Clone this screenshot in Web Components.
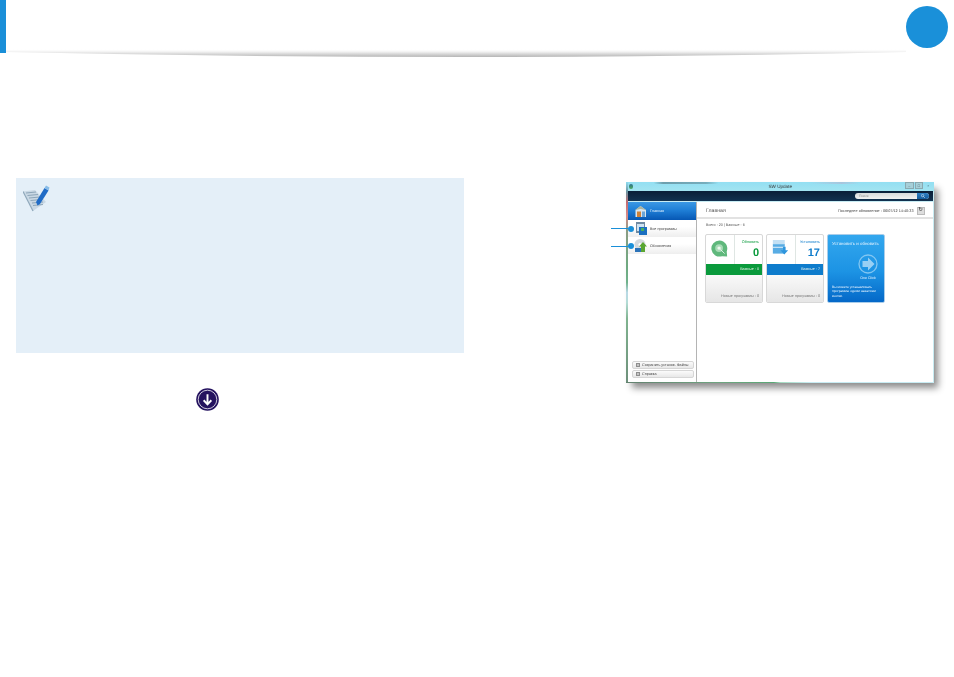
<!DOCTYPE html>
<html lang="ru">
<head>
<meta charset="utf-8">
<title>SW Update</title>
<style>
  html, body { margin: 0; background: #fff; }
  body { width: 954px; height: 677px; overflow: hidden; font-family: "Liberation Sans", Arial, sans-serif; }
</style>
</head>
<body>
<manual-page></manual-page>
<script>
class PageHeader extends HTMLElement {
  constructor() {
    super();
    this.attachShadow({ mode: 'open' });
    this.shadowRoot.innerHTML = `
      <style>
        :host { display: block; position: relative; height: 53px; }
        .bar { display: flex; justify-content: space-between; height: 53px; }
        .tab { width: 6px; background: #1a8fd8; }
        .dot { width: 42px; height: 42px; margin: 6px 6px 0 0; border-radius: 50%; background: #1a90d9; }
        .rule { position: absolute; left: 6px; top: 48px; display: block; }
      </style>
      <svg class="rule" width="900" height="11" viewBox="0 0 900 11">
        <defs>
          <linearGradient id="fade" gradientUnits="userSpaceOnUse" x1="0" y1="1" x2="0" y2="10">
            <stop offset="0" stop-color="#fff" stop-opacity="0"/>
            <stop offset=".45" stop-color="#e2e2e2"/>
            <stop offset="1" stop-color="#aaa"/>
          </linearGradient>
        </defs>
        <path d="M0 4 Q470 14 900 4 L900 0 L0 0 Z" fill="url(#fade)"/>
      </svg>
      <div class="bar"><div class="tab"></div><div class="dot"></div></div>
    `;
  }
}

class NoteBox extends HTMLElement {
  constructor() {
    super();
    this.attachShadow({ mode: 'open' });
    this.shadowRoot.innerHTML = `
      <style>
        :host { display: block; width: 448px; height: 175px; background: #e4eff8; box-sizing: border-box; padding: 7px 0 0 7px; }
        svg { display: block; }
      </style>
      <svg width="27" height="27" viewBox="0 0 27 27">
        <path d="M0 6.500 L12 5 L23 17 L10 26 Z" fill="#c9d8e4"/>
        <path d="M3 8 L13 7 M4.500 10.500 L15 9.500 M6 13 L17 12 M7.500 15.500 L18.500 14.500 M9 18 L20 17 M10 20.500 L20 19.500" stroke="#7d98ad" stroke-width=".8"/>
        <path d="M0 6.500 L10 26" stroke="#8fa8bb" stroke-width="1.200"/>
        <path d="M13 17 L21.500 3 L25.500 5.500 L17 19 L14.500 20.500 Z" fill="#1f6bc6"/>
        <path d="M21.500 3 L23 0.500 L26.500 2.500 L25.500 5.500 Z" fill="#87bce8"/>
      </svg>
    `;
  }
}

class DownButton extends HTMLElement {
  constructor() {
    super();
    this.attachShadow({ mode: 'open' });
    this.shadowRoot.innerHTML = `
      <style>
        :host { display: block; width: 23px; height: 23px; }
        svg { display: block; }
      </style>
      <svg width="23" height="23" viewBox="0 0 24 24">
        <circle cx="12" cy="12" r="11.800" fill="#24125f"/>
        <circle cx="12" cy="12" r="9.700" fill="none" stroke="#fff" stroke-width=".8"/>
        <path d="M12 6.500 V16.500 M8 12.800 L12 17 L16 12.800" fill="none" stroke="#fff" stroke-width="2"/>
      </svg>
    `;
  }
}

class NavItem extends HTMLElement {
  constructor() {
    super();
    this.attachShadow({ mode: 'open' });
    this.shadowRoot.innerHTML = `
      <style>
        :host {
          display: flex; align-items: center; height: 17px; box-sizing: border-box;
          padding-left: 6px; font-size: 3.7px; color: #444;
          background: linear-gradient(#fff 0%, #fff 40%, #eeeeee 100%);
        }
        :host([active]) {
          height: 18px; color: #e8f4ff;
          background: linear-gradient(#3b98e4 0%, #1f7fd6 45%, #0657b4 100%);
        }
        .ic { width: 13px; height: 13px; flex: none; }
        ::slotted(svg) { display: block; }
        .label { margin-left: 3px; white-space: nowrap; }
      </style>
      <div class="ic"><slot name="icon"></slot></div>
      <div class="label"><slot></slot></div>
    `;
  }
}

class TileCard extends HTMLElement {
  static get observedAttributes() { return ['label', 'count', 'band', 'foot', 'tone']; }
  constructor() {
    super();
    this.attachShadow({ mode: 'open' });
    this.shadowRoot.innerHTML = `
      <style>
        :host {
          display: flex; flex-direction: column; width: 58px; height: 69px; box-sizing: border-box;
          border: 1px solid #d8d8d8; border-radius: 2px; overflow: hidden; background: #fff;
          --tone: #0a9a3c;
        }
        :host([tone="blue"]) { --tone: #0e7ccc; }
        .top { display: flex; height: 29px; flex: none; }
        .ic { width: 29px; flex: none; display: flex; align-items: flex-start; justify-content: center; padding: 5px 2px 0 0; box-sizing: border-box; border-right: 1px solid #dfe6e3; }
        ::slotted(svg) { display: block; }
        .nums { flex: 1; text-align: right; padding: 5px 3px 0 0; color: var(--tone); }
        .lab { font-size: 3.8px; line-height: 5px; }
        .num { font-size: 11px; line-height: 13px; font-weight: 700; margin-top: 2px; }
        .band { height: 11px; flex: none; background: var(--tone); color: #e8f4ec; font-size: 3.7px; line-height: 11px; text-align: right; padding-right: 3px; }
        .foot {
          flex: 1; display: flex; align-items: flex-end; justify-content: flex-end; padding: 0 3px 3px 0;
          font-size: 3.8px; line-height: 5px; color: #777; background: linear-gradient(#f9f9f9, #e6e6e6);
        }
      </style>
      <div class="top">
        <div class="ic"><slot name="icon"></slot></div>
        <div class="nums"><div class="lab"></div><div class="num"></div></div>
      </div>
      <div class="band"></div>
      <div class="foot"></div>
    `;
  }
  attributeChangedCallback() {
    const root = this.shadowRoot;
    root.querySelector('.lab').textContent = this.getAttribute('label') || '';
    root.querySelector('.num').textContent = this.getAttribute('count') || '';
    root.querySelector('.band').textContent = this.getAttribute('band') || '';
    root.querySelector('.foot').textContent = this.getAttribute('foot') || '';
  }
}

class OneClickCard extends HTMLElement {
  constructor() {
    super();
    this.attachShadow({ mode: 'open' });
    this.shadowRoot.innerHTML = `
      <style>
        :host {
          display: flex; flex-direction: column; width: 58px; height: 69px; box-sizing: border-box;
          padding: 6px 4px 4px; border-radius: 2px; color: #e6f3ff; border: 1px solid #a9cdea;
          background: linear-gradient(#33a7ee 0%, #1c93e4 55%, #0468c8 100%);
        }
        .title { font-size: 4.4px; line-height: 6px; white-space: nowrap; }
        .go { align-self: flex-end; width: 20px; margin: 7px 2px 0 0; text-align: center; }
        svg { display: block; opacity: .9; }
        .one { font-size: 3.6px; line-height: 5px; margin-top: 2px; white-space: nowrap; }
        .desc { font-size: 3.3px; line-height: 4.5px; margin-top: auto; white-space: nowrap; }
      </style>
      <div class="title">Установить и обновить</div>
      <div class="go">
        <svg width="20" height="20" viewBox="0 0 20 20">
          <circle cx="10" cy="10" r="9" fill="none" stroke="#8ccbf3" stroke-width="1.300"/>
          <path d="M4.500 7 H10 V3.500 L16.500 10 L10 16.500 V13 H4.500 Z" fill="#a4d6f6"/>
        </svg>
        <div class="one">One Click</div>
      </div>
      <div class="desc">Вы можете устанавливать<br>программы одним нажатием<br>кнопки.</div>
    `;
  }
}

class SideButton extends HTMLElement {
  constructor() {
    super();
    this.attachShadow({ mode: 'open' });
    this.shadowRoot.innerHTML = `
      <style>
        :host {
          display: flex; align-items: center; gap: 2px; height: 8px; width: 62px; box-sizing: border-box;
          padding-left: 3px; font-size: 3.7px; color: #444; white-space: nowrap;
          border: 1px solid #d6d6d6; border-radius: 2px; background: linear-gradient(#fbfbfb, #e8e8e8);
        }
        i { width: 4px; height: 4px; flex: none; background: #c4c4c4; border: .5px solid #8e8e8e; box-sizing: border-box; }
      </style>
      <i></i><slot></slot>
    `;
  }
}

class AppWindow extends HTMLElement {
  constructor() {
    super();
    this.attachShadow({ mode: 'open' });
    this.shadowRoot.innerHTML = `
      <style>
        :host {
          display: block; position: relative; width: 308px; height: 201px; box-sizing: border-box;
          font-size: 3.8px; color: #444; text-rendering: geometricPrecision;
          box-shadow: 5px 6px 7px -1px rgba(0,0,0,.45);
          background: #c8ecf3;
        }
        .frame {
          height: 100%; display: flex; flex-direction: column; padding: 0 1.5px 1.5px 2px; box-sizing: border-box;
          background:
            linear-gradient(90deg, #62816f 0%, #6ea580 30%, #58a774 48%, #a5dcc0 50%, #c8ecf3 60%, #c8ecf3 100%) 0 100% / 100% 1.5px no-repeat,
            linear-gradient(180deg, #8fdcf0 0%, #6d94a0 5%, #c26b72 10%, #d88c8a 17%, #8b9c84 24%, #6ea980 42%, #70b28c 50%, #b9d9e6 55%, #b4dcd6 60%, #7fb38f 68%, #6d8f7a 100%) 0 0 / 2px 100% no-repeat,
            linear-gradient(90deg, transparent 0 9%, rgba(60,80,90,.45) 12%, rgba(60,80,90,.35) 26%, transparent 30% 60%, rgba(225,120,160,.25) 70%, transparent 76% 100%) 0 0 / 100% 2px no-repeat,
            linear-gradient(180deg, #93dff2 0, #a2e4f1 9px, #c8ecf3 10px);
          filter: blur(.45px);
        }
        .title {
          height: 9px; flex: none; display: flex; align-items: center; justify-content: center; position: relative;
          font-size: 4.6px; color: #333;
        }
        .title .app { position: absolute; left: 1px; top: 2px; width: 4px; height: 5px; border-radius: 2px; background: linear-gradient(#2f6f8f, #4fae5c); }
        .caps { position: absolute; right: 0; top: 0; display: flex; gap: 1px; font-size: 3.6px; line-height: 6px; text-align: center; color: #47626a; }
        .caps i { width: 8.500px; height: 7px; box-sizing: border-box; font-style: normal; border: .6px solid #8aa9b0; background: #a6cfd8; }
        .caps i:last-child { border-color: transparent; background: none; }
        .tools {
          height: 10px; flex: none; display: flex; align-items: center; justify-content: flex-end; padding-right: 3.500px; margin-bottom: 1px;
          background: linear-gradient(#0a1f38, #123250);
        }
        .search { display: flex; width: 74px; height: 6px; border-radius: 3px; overflow: hidden; background: linear-gradient(#d8dada, #f2f2f2); color: #888; font-size: 3.400px; line-height: 6px; }
        .search span { flex: 1; padding-left: 4px; }
        .search b { width: 12px; display: flex; align-items: center; justify-content: center; background: linear-gradient(#2e80c4, #155c9c); }
        .search svg { display: block; }
        .body { flex: 1; display: flex; min-height: 0; background: #fff; }
        .side { width: 68px; flex: none; display: flex; flex-direction: column; border-right: 1px solid #b4b4b4; background: #fff; }
        .side-foot { margin-top: auto; display: flex; flex-direction: column; gap: 1.500px; padding: 0 0 3.500px 4px; }
        .main { flex: 1; display: flex; flex-direction: column; min-width: 0; }
        .head {
          height: 17px; flex: none; display: flex; align-items: center; justify-content: space-between; box-sizing: border-box;
          padding: 2px 8px 0 9px; border-bottom: 2px solid #e2e2e2;
        }
        .head h2 { margin: 0; font-size: 5.200px; font-weight: 400; color: #555; }
        .updated { display: flex; align-items: center; gap: 3px; color: #444; }
        .refresh { width: 8px; height: 8px; background: #ddd; border: .5px solid #bbb; box-sizing: border-box; display: flex; align-items: center; justify-content: center; font-size: 5.500px; line-height: 5px; color: #333; }
        .stats { padding: 3px 0 0 9px; line-height: 6px; color: #555; font-size: 3.700px; }
        .cards { display: flex; gap: 3px; padding: 6px 0 0 8px; }
        .pin { position: absolute; left: -15px; width: 17px; height: 1.300px; background: #1a8fd8; }
        .pin::after { content: ""; position: absolute; right: -6px; top: -2.500px; width: 6px; height: 6px; border-radius: 50%; background: #1a8fd8; }
        .pin.a { top: 46px; }
        .pin.b { top: 63.500px; }
      </style>
      <div class="frame">
        <div class="title"><div class="app"></div>SW Update<div class="caps"><i>–</i><i>□</i><i>×</i></div></div>
        <div class="tools"><div class="search"><span>Поиск</span><b><svg width="4" height="4" viewBox="0 0 8 8"><circle cx="3.200" cy="3.200" r="2.400" fill="none" stroke="#dcecf7" stroke-width="1.200"/><path d="M5 5 L7.500 7.500" stroke="#dcecf7" stroke-width="1.400"/></svg></b></div></div>
        <div class="body">
          <div class="side">
            <slot name="nav"></slot>
            <div class="side-foot"><slot name="foot"></slot></div>
          </div>
          <div class="main">
            <div class="head">
              <h2>Главная</h2>
              <div class="updated">Последнее обновление : 06/07/12 14:40:33<div class="refresh">↻</div></div>
            </div>
            <div class="stats">Всего : 20 | Важные : 6</div>
            <div class="cards"><slot></slot></div>
          </div>
        </div>
      </div>
      <div class="pin a"></div>
      <div class="pin b"></div>
    `;
  }
}

class ManualPage extends HTMLElement {
  constructor() {
    super();
    this.attachShadow({ mode: 'open' });
    this.shadowRoot.innerHTML = `
      <style>
        :host { display: block; width: 954px; height: 677px; }
        .content { display: flex; padding-left: 16px; }
        .left { width: 448px; padding-top: 125px; flex: none; }
        .down { padding: 35px 0 0 179.500px; }
        .right { padding: 129px 0 0 162px; }
      </style>
      <page-header></page-header>
      <div class="content">
        <div class="left">
          <note-box></note-box>
          <div class="down"><down-button></down-button></div>
        </div>
        <div class="right">
          <app-window>
            <nav-item slot="nav" active>
              <svg slot="icon" width="13" height="13" viewBox="0 0 13 13"><path d="M6.500 1 L12 5 V12 H1.500 V5 Z" fill="#d9e6ef"/><path d="M6.500 1 L12 5 L6.500 4 L1 5 Z" fill="#a9b4a0"/><rect x="3" y="6.500" width="4" height="5.500" fill="#cf8238"/><rect x="8" y="6.500" width="3" height="5.500" fill="#6aa5d8"/></svg>
              Главная
            </nav-item>
            <nav-item slot="nav">
              <svg slot="icon" width="13" height="13" viewBox="0 0 13 13"><rect x="2" y="0" width="9" height="11" fill="#6f8ba3"/><rect x="3" y="2" width="7" height="7" fill="#cfe3f2"/><rect x="5" y="5" width="8" height="8" fill="#1a6fc0"/><rect x="7" y="6" width="3" height="3" fill="#49b05c"/></svg>
              Все программы
            </nav-item>
            <nav-item slot="nav">
              <svg slot="icon" width="13" height="13" viewBox="0 0 13 13"><circle cx="6" cy="5.500" r="5.500" fill="#d4d9dd"/><circle cx="6" cy="5.500" r="1.600" fill="#fff"/><path d="M1 9 H7 V13 H1 Z" fill="#2c73b8"/><path d="M9 3 L13 7.500 H11 V13 H7 V7.500 H5 Z" fill="#5aa632"/></svg>
              Обновления
            </nav-item>
            <side-button slot="foot">Сохранить установ. Файлы</side-button>
            <side-button slot="foot">Справка</side-button>

            <tile-card label="Обновить" count="0" band="Важные : 0" foot="Новые программы : 0">
              <svg slot="icon" width="17" height="17" viewBox="0 0 20 20"><path d="M10 0.500 A9.500 9.500 0 1 0 13 19 L19 19.500 L18.500 13.500 A9.500 9.500 0 0 0 10 0.500 Z" fill="#5fb87c"/><circle cx="9.500" cy="9.500" r="4.600" fill="#a8dbb6"/><circle cx="9.500" cy="9.500" r="2" fill="#eef8f0"/><path d="M11 11 L16 16" stroke="#eaf6ee" stroke-width="1"/></svg>
            </tile-card>
            <tile-card tone="blue" label="Установить" count="17" band="Важные : 7" foot="Новые программы : 0">
              <svg slot="icon" width="17" height="17" viewBox="0 0 20 20"><rect x="1" y="0" width="14" height="6" fill="#c3e0f4"/><rect x="1" y="5" width="14" height="11" fill="#58ace4"/><rect x="1" y="8" width="14" height="1" fill="#fff"/><path d="M13 8 H16 V12 H19 L14.500 17 L10 12 H13 Z" fill="#2e95dd"/></svg>
            </tile-card>
            <one-click-card></one-click-card>
          </app-window>
        </div>
      </div>
    `;
  }
}

customElements.define('page-header', PageHeader);
customElements.define('note-box', NoteBox);
customElements.define('down-button', DownButton);
customElements.define('nav-item', NavItem);
customElements.define('tile-card', TileCard);
customElements.define('one-click-card', OneClickCard);
customElements.define('side-button', SideButton);
customElements.define('app-window', AppWindow);
customElements.define('manual-page', ManualPage);
</script>
</body>
</html>
